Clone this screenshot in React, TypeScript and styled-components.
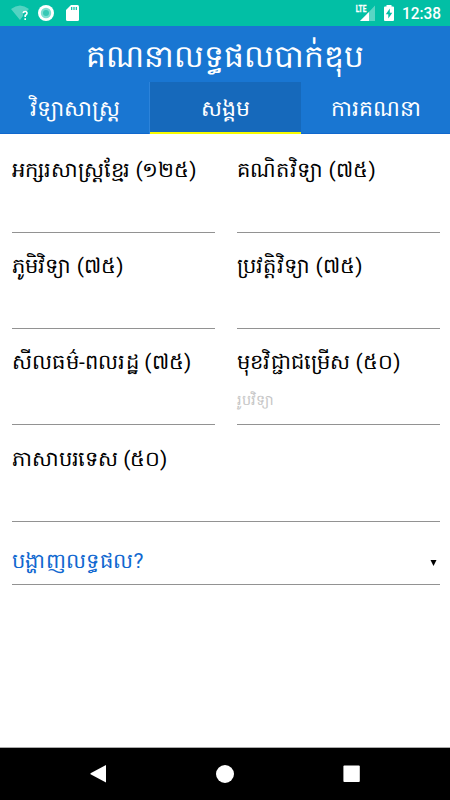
import React from 'react';
import styled, { createGlobalStyle } from 'styled-components';

const GlobalStyle = createGlobalStyle`
  body { margin: 0; background: #fff; }
  * { box-sizing: border-box; }
`;

const Screen = styled.div`
  display: flex;
  flex-direction: column;
  width: 450px;
  height: 800px;
  overflow: hidden;
  background: #fff;
  color: #000;
  font-family: Roboto, sans-serif;
`;

const StatusBar = styled.div`
  display: flex;
  justify-content: space-between;
  height: 26px;
  flex: none;
  background: #02bfa5;
`;

const Header = styled.header`
  flex: none;
  height: 108px;
  background: #1976d2;
  color: #fff;
  border-bottom: 1px solid #1068cd;
`;

const Title = styled.h1`
  margin: 0;
  height: 56px;
  padding-top: 3px;
  text-align: center;
  font-size: 31.2px;
  line-height: 56px;
  font-weight: 400;
  white-space: nowrap;
`;

const Tabs = styled.nav`
  display: grid;
  grid-template-columns: 150px 151px 149px;
  height: 52px;
`;

const Tab = styled.div<{ $active?: boolean }>`
  height: 52px;
  padding-top: 1px;
  text-align: center;
  font-size: 22px;
  line-height: 52px;
  white-space: nowrap;
  background: ${p => (p.$active ? '#1669bb' : 'transparent')};
  border-bottom: ${p => (p.$active ? '2px solid #f8fb00' : 'none')};
  box-shadow: ${p => (p.$active ? '-1px 0 #2c83da' : 'none')};
`;

const Form = styled.main`
  flex: 1;
  display: grid;
  grid-template-columns: 203px 203px;
  grid-template-rows: 99px 96px 96px 97px 63px;
  column-gap: 22px;
  padding: 0 10px 0 12px;
`;

const Field = styled.label<{ $wide?: boolean }>`
  display: flex;
  flex-direction: column;
  justify-content: flex-end;
  grid-column: ${p => (p.$wide ? '1 / -1' : 'auto')};
  border-bottom: 1px solid #929292;
`;

const Caption = styled.span<{ $spacing: number }>`
  height: 30px;
  line-height: 30px;
  font-size: 21px;
  letter-spacing: ${p => p.$spacing}px;
  white-space: nowrap;
`;

const Value = styled.span`
  height: 47px;
  padding-top: 9px;
  line-height: 30px;
  font-size: 14.4px;
  color: #c6c6c6;
`;

const ResultRow = styled.div`
  grid-column: 1 / -1;
  display: flex;
  align-items: flex-end;
  justify-content: space-between;
  padding: 0 3px 8px 0;
  border-bottom: 1px solid #929292;
  color: #1068d0;
`;

const NavBar = styled.div`
  display: flex;
  justify-content: center;
  height: 53px;
  flex: none;
  background: #000;
  border-top: 1px solid #aaa;
`;

const fields = [
  { caption: 'អក្សរសាស្ត្រខ្មែរ (១២៥)', value: '', spacing: -0.1 },
  { caption: 'គណិតវិទ្យា (៧៥)', value: '', spacing: 0.22 },
  { caption: 'ភូមិវិទ្យា (៧៥)', value: '', spacing: 0.1 },
  { caption: 'ប្រវត្តិវិទ្យា (៧៥)', value: '', spacing: 0.2 },
  { caption: 'សីលធម៌-ពលរដ្ឋ (៧៥)', value: '', spacing: 0.22 },
  { caption: 'មុខវិជ្ជាជម្រើស (៥០)', value: 'រូបវិទ្យា', spacing: 0.17 },
  { caption: 'ភាសាបរទេស (៥០)', value: '', spacing: -0.14, wide: true },
];

function SystemIcons() {
  return (
    <svg width="100" height="26" fill="#fff">
      <path d="M11 9Q20 2 29 9L26 12H23V16L20 20Z" opacity=".32" />
      <path d="M23.2 13.2Q23.4 11.5 25.2 11.5Q27 11.5 27 13.2Q27 14.3 25.2 15.5V17M25.2 18.3V20" fill="none" stroke="#fff" strokeWidth="1.6" />
      <circle cx="46" cy="13" r="8" />
      <circle cx="46" cy="13" r="5.2" fill="#7ddfd1" />
      <circle cx="46" cy="13" r="3" fill="#38c9b5" />
      <path d="M71 5H77.5Q79 5 79 6.5V19.5Q79 21 77.5 21H67.5Q66 21 66 19.5V10Z" />
      <path d="M71.7 7V10M74 7V10M76.3 7V10" stroke="#02bfa5" strokeWidth="1.2" />
    </svg>
  );
}

function ConnectionIcons() {
  return (
    <svg width="110" height="26" fill="#fff">
      <text x="15.8" y="12.2" fontSize="9.5" fontWeight="700" stroke="#fff" strokeWidth=".3" textLength="10.5" lengthAdjust="spacingAndGlyphs">LTE</text>
      <path d="M35 5.5V21H20L27 14V13H28L35 5.5Z" opacity=".35" />
      <path d="M20 21L29 12V21Z" />
      <path d="M46.5 5H51.5V6.5H53Q54 6.5 54 7.5V20Q54 21 53 21H45Q44 21 44 20V7.5Q44 6.5 45 6.5H46.5Z" />
      <path d="M49.8 8.5L45.8 14.2H48.3V18.6L52.3 12.8H49.8Z" fill="#02bfa5" />
      <text x="62" y="19.2" fontSize="16.5" fontWeight="500" textLength="39" lengthAdjust="spacingAndGlyphs">12:38</text>
    </svg>
  );
}

export default function App() {
  return (
    <Screen>
      <GlobalStyle />
      <StatusBar>
        <SystemIcons />
        <ConnectionIcons />
      </StatusBar>
      <Header>
        <Title>គណនាលទ្ធផលបាក់ឌុប</Title>
        <Tabs>
          <Tab>វិទ្យាសាស្ត្រ</Tab>
          <Tab $active>សង្គម</Tab>
          <Tab>ការគណនា</Tab>
        </Tabs>
      </Header>
      <Form>
        {fields.map(f => (
          <Field key={f.caption} $wide={f.wide}>
            <Caption $spacing={f.spacing}>{f.caption}</Caption>
            <Value>{f.value}</Value>
          </Field>
        ))}
        <ResultRow>
          <Caption $spacing={0.35}>បង្ហាញលទ្ធផល?</Caption>
          <svg width="7" height="24"><path d="M0.5 8H6.5L3.5 14Z" fill="#000" /></svg>
        </ResultRow>
      </Form>
      <NavBar>
        <svg width="450" height="52" fill="#fff">
          <path d="M106 17V34.5L90.5 26.3V25.3Z" />
          <circle cx="225" cy="26" r="9" />
          <rect x="343.4" y="17.5" width="16.4" height="16.5" rx="1" />
        </svg>
      </NavBar>
    </Screen>
  );
}
